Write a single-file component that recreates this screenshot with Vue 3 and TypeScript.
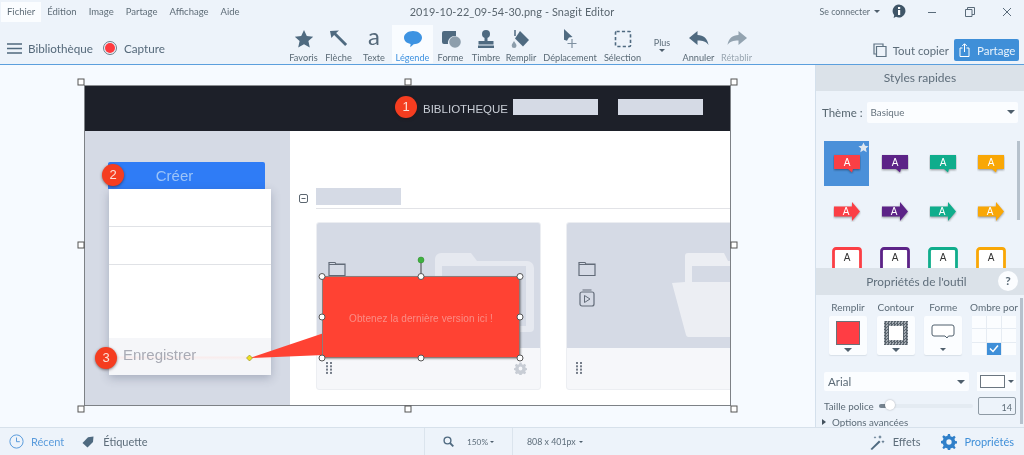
<script setup lang="ts">
const menu: string[] = ['Fichier', 'Édition', 'Image', 'Partage', 'Affichage', 'Aide']
const colors: string[] = ['#fb3f45', '#5c2387', '#10ad8c', '#f9a706']
const handles: number[][] = [
  [322, 211.5], [421, 211.5], [520, 211.5], [322, 252], [520, 252], [322, 293], [421, 293], [520, 293]
]
const frame: number[][] = [
  [81, 17], [408, 17], [734, 17], [81, 180], [734, 180], [81, 344], [408, 344], [734, 344]
]
const shadowCells: number[] = [0, 1, 2, 3, 4, 5, 6, 7, 8]
</script>

<template>
  <div class="app">
    <header class="top">
      <div class="titlebar">
        <nav class="menu">
          <span v-for="(m, i) in menu" :key="m" class="menu-item" :class="{ on: i === 0 }">{{ m }}</span>
        </nav>
        <div class="title">2019-10-22_09-54-30.png - Snagit Editor</div>
        <div class="win">
          <span class="login">Se connecter</span><i class="caret small"></i>
          <svg class="info" width="14" height="15" viewBox="0 0 14 15"><path d="M7 0.5a6.5 6.5 0 1 1-3 12.3L1.6 14l.6-2.8A6.5 6.5 0 0 1 7 .5z" fill="#3f5567"/><rect x="6" y="6" width="2.2" height="5" fill="#fff"/><rect x="6" y="3" width="2.2" height="2" fill="#fff"/></svg>
          <svg class="w1" width="10" height="10" viewBox="0 0 10 10"><path d="M1 5.5h8" stroke="#5a6b7a" stroke-width="1"/></svg>
          <svg class="w2" width="10" height="10" viewBox="0 0 10 10"><path d="M.5 2.5h6.5v7H.5zM2.5 2.5V.5h7v7H7" fill="none" stroke="#5a6b7a"/></svg>
          <svg class="w3" width="10" height="10" viewBox="0 0 10 10"><path d="M1 1l8 8M9 1l-8 8" stroke="#5a6b7a" stroke-width="1"/></svg>
        </div>
      </div>
      <div class="toolbar">
        <div class="left-tools">
          <svg width="15" height="11" viewBox="0 0 15 11"><path d="M0 1h15M0 5.500h15M0 10h15" stroke="#50697e" stroke-width="1.600"/></svg>
          <span class="biblio">Bibliothèque</span>
          <span class="rec"><i></i></span>
          <span class="biblio">Capture</span>
        </div>
        <div class="tools">
          <div class="tool t-fav"><svg width="20" height="20" viewBox="0 0 20 20"><path d="M10 1l2.8 6 6.4.7-4.8 4.3 1.4 6.5L10 15.2 4.200 18.500 5.600 12 .8 7.700l6.400-.7z" fill="#4f6a80"/></svg><span>Favoris</span></div>
          <div class="tool t-arr"><svg width="20" height="20" viewBox="0 0 20 20"><path d="M1 2l9-.6-2.900 2.700 11 11-2 2-11-11L2.400 9z" fill="#4f6a80"/></svg><span>Flèche</span></div>
          <div class="tool t-txt"><em>a</em><span>Texte</span></div>
          <div class="tool active"><svg width="20" height="20" viewBox="0 0 20 20"><path d="M10 2c5 0 9 2.800 9 6.800 0 3.700-4 6.500-8.300 6.500l-3.500 3 .4-3.400C3.400 14.200 1 11.800 1 8.800 1 4.800 5 2 10 2z" fill="#3d93e2"/></svg><span>Légende</span></div>
          <div class="tool t-forme"><svg width="20" height="20" viewBox="0 0 20 20"><path d="M1 4a2 2 0 0 1 2-2h12v5a7 7 0 0 0-8 8H3a2 2 0 0 1-2-2z" fill="#4f6a80"/><circle cx="14" cy="13" r="5.800" fill="#8d9eac"/></svg><span>Forme</span></div>
          <div class="tool t-timbre"><svg width="20" height="20" viewBox="0 0 20 20"><circle cx="10" cy="5" r="4" fill="#4f6a80"/><path d="M8.500 8h3v4h6v3.500h-15V12h6z" fill="#4f6a80"/><rect x="2" y="16.500" width="16" height="2.500" fill="#4f6a80"/></svg><span>Timbre</span></div>
          <div class="tool t-rem"><svg width="20" height="20" viewBox="0 0 20 20"><path d="M9 2l9 9-6 6.500-8-8z" fill="#4f6a80"/><path d="M4 1v6" stroke="#4f6a80" stroke-width="1.500"/><path d="M3 12c1 2 2.500 3 2.500 4.700a2.400 2.400 0 0 1-4.800 0C.7 15 2 14 3 12z" fill="#8d9eac"/></svg><span>Remplir</span></div>
          <div class="tool t-dep"><svg width="20" height="20" viewBox="0 0 20 20"><path d="M4 0l8.500 8-3.500.4-1 1.600-1 1.800-3-1z" fill="#4f6a80"/><path d="M12 10v9M7.500 14.500h9" stroke="#7e90a0" stroke-width="1.200"/></svg><span>Déplacement</span></div>
          <div class="tool t-sel"><svg width="20" height="20" viewBox="0 0 20 20"><rect x="2.500" y="2.500" width="15" height="15" rx="1" fill="none" stroke="#4f6a80" stroke-width="1.600" stroke-dasharray="3.200 2.200"/></svg><span>Sélection</span></div>
          <div class="plus"><span>Plus</span><i class="caret small"></i></div>
          <div class="tool t-ann"><svg width="20" height="20" viewBox="0 0 20 20"><path d="M0 9l8.500-7v4c6 0 10 3.500 11 10-2.500-3.400-5.500-4.400-11-4.400V16z" fill="#4f6a80"/></svg><span>Annuler</span></div>
          <div class="tool t-ret dim"><svg width="20" height="20" viewBox="0 0 20 20"><path d="M20 9l-8.500-7v4c-6 0-10 3.500-11 10 2.500-3.400 5.500-4.400 11-4.400V16z" fill="#93a3b0"/></svg><span>Rétablir</span></div>
        </div>
        <div class="right-tools">
          <svg width="14" height="14" viewBox="0 0 14 14"><path d="M3.500 3.500h9.500v10H3.500zM3.500 11H1V1h9v2.500" fill="none" stroke="#5f7383" stroke-width="1.200"/></svg>
          <span class="copy">Tout copier</span>
          <button class="share">
            <svg width="11" height="14" viewBox="0 0 11 14"><path d="M3.500 5H1v8.500h9V5H7.500M5.500 9V1M3.200 3l2.300-2.300L7.800 3" fill="none" stroke="#fff" stroke-width="1"/></svg>
            <span>Partage</span>
          </button>
        </div>
      </div>
    </header>

    <main class="main">
      <section class="canvas">
        <div class="shot">
          <div class="shot-head">
            <span class="lib">BIBLIOTHEQUE</span>
            <i class="ph"></i>
            <i class="ph"></i>
          </div>
          <div class="shot-body">
            <aside class="shot-side">
              <div class="create">Créer</div>
              <div class="panel">
                <div class="row r1"></div>
                <div class="row r2"></div>
                <div class="row r3"></div>
                <div class="save">Enregistrer</div>
              </div>
            </aside>
            <div class="shot-content">
              <div class="group">
                <svg width="9" height="9" viewBox="0 0 9 9"><rect x=".5" y=".5" width="8" height="8" rx="1.500" fill="none" stroke="#5c6670"/><path d="M2.500 4.500h4" stroke="#5c6670"/></svg>
                <i class="group-ph"></i>
              </div>
              <div class="cards">
                <article class="card">
                  <div class="card-top">
                    <svg class="big" width="100" height="82" viewBox="0 0 100 82"><path d="M0 8a6 6 0 0 1 6-6h30l6 8h50a7 7 0 0 1 7 7v60a4 4 0 0 1-4 4H4a4 4 0 0 1-4-4z" fill="#e6e9f0"/><rect x="7" y="15" width="84" height="60" fill="#d5dae5"/></svg>
                    <svg class="mini" width="18" height="16" viewBox="0 0 18 16"><path d="M1 14.500v-13h6l1 1.500h9v11.500zM1 3.500h16" fill="none" stroke="#626b78" stroke-width="1.200"/></svg>
                  </div>
                  <div class="card-foot">
                    <svg width="8" height="12" viewBox="0 0 8 12"><g fill="#747c88"><rect x="0" y="0" width="2" height="2"/><rect x="4" y="0" width="2" height="2"/><rect x="0" y="3.300" width="2" height="2"/><rect x="4" y="3.300" width="2" height="2"/><rect x="0" y="6.600" width="2" height="2"/><rect x="4" y="6.600" width="2" height="2"/><rect x="0" y="9.900" width="2" height="2"/><rect x="4" y="9.900" width="2" height="2"/></g></svg>
                    <svg width="13" height="13" viewBox="0 0 24 24"><path d="M12 8.500a3.500 3.500 0 1 0 0 7 3.500 3.500 0 0 0 0-7zM10 1h4l.6 3 2.400 1 2.600-1.700 2.800 2.800L20.700 8.700 21.700 11l3 .6v2.800l-3 .6-1 2.400 1.700 2.600-2.800 2.800-2.600-1.700-2.400 1-.6 3h-4l-.6-3-2.400-1-2.600 1.700-2.800-2.800 1.700-2.600-1-2.400-3-.6v-2.800l3-.6 1-2.300L1.600 6.100l2.800-2.800L7 5l2.400-1z" fill="#c8cdd5" fill-rule="evenodd"/></svg>
                  </div>
                </article>
                <article class="card two">
                  <div class="card-top">
                    <svg class="big" width="76" height="86" viewBox="0 0 76 86"><path d="M13 30V4a3 3 0 0 1 3-3h36l4 8h20v76H16a3 3 0 0 1-2-2L0 31z" fill="#eceef3"/><rect x="20" y="14" width="56" height="16" fill="#d5dae5"/></svg>
                    <svg class="mini" width="18" height="16" viewBox="0 0 18 16"><path d="M1 14.500v-13h6l1 1.500h9v11.500zM1 3.500h16" fill="none" stroke="#626b78" stroke-width="1.200"/></svg>
                    <svg class="mini m2" width="16" height="18" viewBox="0 0 16 18"><rect x="1" y="3" width="14" height="14" rx="2" fill="none" stroke="#626b78" stroke-width="1.200"/><path d="M3.500 1h9" stroke="#626b78"/><path d="M5.500 6.500l5.500 3.500-5.500 3.500z" fill="none" stroke="#626b78"/></svg>
                  </div>
                  <div class="card-foot">
                    <svg width="8" height="12" viewBox="0 0 8 12"><g fill="#747c88"><rect x="0" y="0" width="2" height="2"/><rect x="4" y="0" width="2" height="2"/><rect x="0" y="3.300" width="2" height="2"/><rect x="4" y="3.300" width="2" height="2"/><rect x="0" y="6.600" width="2" height="2"/><rect x="4" y="6.600" width="2" height="2"/><rect x="0" y="9.900" width="2" height="2"/><rect x="4" y="9.900" width="2" height="2"/></g></svg>
                  </div>
                </article>
              </div>
            </div>
          </div>
        </div>

        <span class="badge b1">1</span>
        <span class="badge b2">2</span>
        <span class="badge b3">3</span>

        <svg class="overlay" width="815" height="362" viewBox="0 0 815 362">
          <g v-for="(f, i) in frame" :key="i">
            <rect :x="f[0] - 3" :y="f[1] - 3" width="6" height="6" fill="#fff" stroke="#555" stroke-width="1" />
          </g>
          <path d="M324 268L250 293L324 290z" fill="#ff4233" />
          <path d="M421 211V195" stroke="#444" />
          <circle cx="421" cy="195" r="3" fill="#3fb13f" stroke="#2a8a2a" stroke-width=".5" />
          <path d="M249.500 290l3 3-3 3-3-3z" fill="#f0e020" stroke="#8a8420" stroke-width=".6" />
        </svg>

        <div class="callout">Obtenez la dernière version ici !</div>

        <svg class="overlay" width="815" height="362" viewBox="0 0 815 362">
          <circle v-for="(h, i) in handles" :key="i" :cx="h[0]" :cy="h[1]" r="3" fill="#fff" stroke="#555" stroke-width="1" />
        </svg>
      </section>

      <aside class="side">
        <h2 class="side-head">Styles rapides</h2>
        <div class="theme">
          <label>Thème :</label>
          <div class="select"><span>Basique</span><i class="caret"></i></div>
        </div>
        <div class="styles">
          <div v-for="(c, i) in colors" :key="'a' + c" class="cell" :class="{ sel: i === 0 }">
            <svg width="28" height="20" viewBox="0 0 28 20"><path d="M1 1h26v14H20l-1 3.500-4-3.500H1z" :fill="c" class="drop"/><text x="14" y="11.500" class="a" fill="#fff">A</text></svg>
            <svg v-if="i === 0" class="star" width="11" height="11" viewBox="0 0 20 20"><path d="M10 1l2.800 6 6.400.7-4.800 4.300 1.400 6.500L10 15.200 4.200 18.500 5.600 12 .8 7.700l6.400-.7z" fill="#dfe7ef"/></svg>
          </div>
          <div v-for="c in colors" :key="'b' + c" class="cell">
            <svg width="28" height="20" viewBox="0 0 28 20"><path d="M1 4.500h18V0l8 9.500-8 9.500v-4.500H1z" :fill="c" class="drop"/><text x="13" y="13" class="a" fill="#fff">A</text></svg>
          </div>
          <div v-for="c in colors" :key="'c' + c" class="cell">
            <svg width="30" height="26" viewBox="0 0 30 26"><rect x="1.500" y="1.500" width="27" height="23" rx="2.500" fill="#fff" :stroke="c" stroke-width="2.800"/><text x="15" y="14" class="a dark" fill="#333">A</text></svg>
          </div>
          <div class="bar"></div>
        </div>

        <div class="props">
          <h2 class="side-head props-head">Propriétés de l'outil<span class="help">?</span></h2>
          <div class="props-body">
            <div class="swatches">
              <div class="sw">
                <span class="sw-l">Remplir</span>
                <div class="box"><i class="fill"></i><i class="caret"></i></div>
              </div>
              <div class="sw">
                <span class="sw-l">Contour</span>
                <div class="box"><i class="outline"></i><i class="caret"></i></div>
              </div>
              <div class="sw">
                <span class="sw-l">Forme</span>
                <div class="box">
                  <svg class="shape" width="24" height="16" viewBox="0 0 24 16"><path d="M3 1h18a2 2 0 0 1 2 2v7a2 2 0 0 1-2 2h-3.500l-1.500 2-2-2H3a2 2 0 0 1-2-2V3a2 2 0 0 1 2-2z" fill="#fff" stroke="#4f5f6c"/></svg>
                  <i class="caret small"></i>
                </div>
              </div>
              <div class="sw sw-o">
                <span class="sw-l">Ombre por</span>
                <div class="shadow-grid">
                  <i v-for="n in shadowCells" :key="n" :class="{ checked: n === 7 }">
                    <svg v-if="n === 7" width="10" height="9" viewBox="0 0 10 9"><path d="M1 4.500l3 3 5-6" fill="none" stroke="#fff" stroke-width="1.500"/></svg>
                  </i>
                </div>
              </div>
            </div>
            <div class="font-row">
              <div class="font"><span>Arial</span><i class="caret"></i></div>
              <div class="color"><i></i><i class="caret small"></i></div>
            </div>
            <div class="size-row">
              <span>Taille police</span>
              <div class="slider"><i class="done"></i><i class="thumb"></i></div>
              <div class="num">14</div>
            </div>
            <div class="adv"><i class="tri"></i><span>Options avancées</span></div>
          </div>
          <div class="bar2"></div>
        </div>
      </aside>
    </main>

    <footer class="bottom">
      <div class="b-left">
        <svg width="15" height="15" viewBox="0 0 15 15"><circle cx="7.500" cy="7.500" r="6.600" fill="none" stroke="#5b9cdc" stroke-width="1"/><path d="M7.500 3.500v4.200h3.300" fill="none" stroke="#5b9cdc"/></svg>
        <span class="recent">Récent</span>
        <svg class="tag" width="12" height="12" viewBox="0 0 12 12"><path d="M.5 7L6 1.200 11.500.5 11 6l-5.500 5.500z" fill="#4f6a80"/></svg>
        <span class="etq">Étiquette</span>
      </div>
      <div class="zoom">
        <svg width="11" height="11" viewBox="0 0 11 11"><circle cx="4.500" cy="4.500" r="3.400" fill="none" stroke="#4f6a80" stroke-width="1.400"/><path d="M7 7l3.300 3.300" stroke="#4f6a80" stroke-width="1.800"/></svg>
        <span>150%</span><i class="caret tiny"></i>
      </div>
      <div class="dims"><span>808 x 401px</span><i class="caret tiny"></i></div>
      <div class="b-right">
        <svg width="16" height="16" viewBox="0 0 16 16"><path d="M1.500 15L10 6.500l1.500 1.500L3 16z" fill="#4f6a80"/><path d="M11 1l.6 1.600L13 3l-1.400.6L11 5l-.6-1.400L9 3l1.400-.4zM14 6l.5 1.200 1.200.5-1.200.5-.5 1.200-.5-1.200-1.200-.5 1.200-.5zM6 2l.4 1 1 .4-1 .4-.4 1-.4-1-1-.4 1-.4z" fill="#4f6a80"/></svg>
        <span class="eff">Effets</span>
        <svg class="gear" width="16" height="16" viewBox="0 0 24 24"><path d="M12 8a4 4 0 1 0 0 8 4 4 0 0 0 0-8zM10.500 0h3l.7 3.300 2.800 1.200 2.900-1.900 2.100 2.100-1.900 2.900 1.200 2.800 3.300.7v3l-3.300.7-1.200 2.800 1.900 2.900-2.100 2.100-2.900-1.900-2.800 1.200-.7 3.300h-3l-.7-3.300-2.800-1.200-2.900 1.900-2.100-2.100 1.900-2.900-1.200-2.800L-.7 13.500v-3l3.300-.7 1.200-2.800-1.900-2.900 2.100-2.100L6.900 3.900l2.800-1.200z" fill="#2f7fc9" fill-rule="evenodd"/></svg>
        <span class="prop">Propriétés</span>
      </div>
    </footer>
  </div>
</template>

<style>
html, body { margin: 0; padding: 0; background: #edf3fa; }
</style>

<style scoped>
* { box-sizing: border-box; }
.app { width: 1024px; height: 455px; display: flex; flex-direction: column; overflow: hidden; background: #edf3fa; font-family: Lato, "Open Sans", sans-serif; color: #5d6d7a; filter: blur(.35px); }
i { display: block; font-style: normal; }
.caret { width: 0; height: 0; border-left: 4px solid transparent; border-right: 4px solid transparent; border-top: 4px solid #4f5f6c; }
.caret.small { border-left-width: 3.500px; border-right-width: 3.500px; border-top-width: 3px; }
.caret.tiny { border-left-width: 2.500px; border-right-width: 2.500px; border-top-width: 2.500px; }

.top { height: 65px; flex: none; border-bottom: 1px solid #5b9fdd; }
.titlebar { height: 21px; margin-top: 1px; display: grid; grid-template-columns: 1fr auto 1fr; align-items: center; }
.menu { display: flex; align-items: stretch; height: 20px; padding-left: 1px; }
.menu-item { padding: 0 6px; font-size: 9.500px; line-height: 20px; color: #5f6d78; }
.menu-item.on { background: #fbfdff; }
.title { font-size: 10.900px; color: #5a666f; letter-spacing: .1px; }
.win { display: flex; align-items: center; justify-content: flex-end; font-size: 8.800px; }
.login { margin-right: 4px; color: #5f6d78; }
.info { margin-left: 12px; }
.w1 { margin-left: 21px; }
.w2 { margin-left: 28px; }
.w3 { margin-left: 27px; margin-right: 12px; }

.toolbar { height: 42px; display: flex; align-items: stretch; }
.left-tools { width: 288px; padding: 10px 0 0 7px; display: flex; align-items: center; }
.biblio { font-size: 11.700px; color: #55697a; margin-left: 6px; }
.rec { width: 14px; height: 14px; border-radius: 50%; border: 1px solid #6f7d88; margin-left: 10px; display: flex; align-items: center; justify-content: center; }
.rec i { width: 10px; height: 10px; border-radius: 50%; background: #ff3a3f; }
.rec + .biblio { margin-left: 7px; }
.tools { display: flex; align-items: stretch; }
.tool { display: flex; flex-direction: column; align-items: center; font-size: 9.200px; color: #5a6a76; height: 42px; padding-top: 7px; position: relative; }
.tool svg { height: 20px; flex: none; }
.tool em { height: 20px; font-family: Lato, sans-serif; font-style: normal; font-size: 24px; line-height: 14px; color: #55697a; }
.tool span { margin-top: 3px; white-space: nowrap; line-height: 11px; }
.t-fav { width: 31px; }
.t-arr { width: 29px; margin-left: 5px; }
.t-txt { width: 24px; margin-left: 9px; }
.active { width: 41px; margin-left: 6px; margin-top: 3px; padding-top: 4px; height: 38px; background: #f9fcff; color: #3f92e0; }
.t-forme { width: 27px; margin-left: 4px; }
.t-timbre { width: 30px; margin-left: 7px; }
.t-rem { width: 32px; margin-left: 4px; }
.t-dep { width: 56px; margin-left: 5px; }
.t-sel { width: 39px; margin-left: 5px; }
.plus { width: 18px; margin-left: 11px; display: flex; flex-direction: column; align-items: center; font-size: 9px; padding-top: 15px; gap: 1px; }
.t-ann { width: 33px; margin-left: 11px; }
.t-ret { width: 33px; margin-left: 5px; }
.dim { color: #99a6b1; }
.right-tools { flex: 1; display: flex; align-items: center; padding: 14px 5px 0 0; justify-content: flex-end; }
.copy { font-size: 11.400px; color: #5d6d7a; margin-left: 6px; }
.share { width: 65px; height: 22px; margin-left: 5px; border: 0; border-radius: 2px; background: #3f8fd8; color: #e9f3fc; font: 11.500px Lato, sans-serif; display: flex; align-items: center; padding: 0 0 0 5px; gap: 7px; }

.main { flex: 1; display: flex; min-height: 0; }
.canvas { width: 815px; flex: none; position: relative; background: #f6faff; overflow: hidden; }
.shot { position: absolute; left: 84px; top: 20px; width: 647px; height: 321px; border: 1px solid #7d8186; border-top-color: #8a8d91; background: #fff; display: flex; flex-direction: column; overflow: hidden; }
.shot-head { height: 45px; flex: none; background: #1d2029; display: flex; align-items: center; padding-left: 338px; }
.lib { font: 11.500px "Liberation Sans", Arial, sans-serif; color: #c9ced6; margin-right: 5px; }
.ph { width: 85px; height: 16px; background: #d5dae5; margin-right: 20px; flex: none; margin-top: -3px; }
.shot-body { flex: 1; display: flex; min-height: 0; }
.shot-side { width: 205px; flex: none; background: #d5dae5; padding: 31px 0 0 23px; }
.create { width: 157px; height: 27px; padding-right: 24px; background: #2f7cf6; border-radius: 2px 2px 0 0; color: #9cc4f8; font: 15px "Liberation Sans", Arial, sans-serif; line-height: 27px; text-align: center; }
.panel { width: 162px; margin-left: 1px; height: 186px; background: #fff; box-shadow: 0 3px 9px rgba(60, 70, 100, .3); display: flex; flex-direction: column; }
.row { flex: none; }
.r1 { height: 38px; border-bottom: 1px solid #e0e2e6; }
.r2 { height: 38px; border-bottom: 1px solid #e0e2e6; }
.r3 { height: 73px; }
.save { flex: 1; background: linear-gradient(#f5f6f9 0 48%, #f9ecec 52%, #f5f6f9 60%); color: #a9abb5; font: 15px "Liberation Sans", Arial, sans-serif; padding: 8px 0 0 14px; }
.shot-content { flex: 1; padding: 57px 0 0 9px; overflow: hidden; min-width: 0; }
.group { display: flex; align-items: center; gap: 8px; border-bottom: 0; height: 20px; position: relative; }
.group::after { content: ""; position: absolute; left: 17px; right: 0; bottom: -1px; height: 1px; background: #e2e3e7; }
.group-ph { width: 85px; height: 17px; background: #d5dae5; margin-top: -3px; }
.cards { display: flex; gap: 25px; margin: 14px 0 0 17px; }
.card { width: 225px; height: 168px; flex: none; border-radius: 3px; overflow: hidden; background: #f6f7fa; border: 1px solid #eceef2; display: flex; flex-direction: column; position: relative; }
.card-top { height: 125px; background: #d5dae5; position: relative; flex: none; overflow: hidden; }
.big { position: absolute; left: 118px; top: 28px; }
.two .big { left: 105px; top: 29px; }
.mini { position: absolute; left: 11px; top: 38px; }
.m2 { top: 66px; left: 12px; }
.card-foot { flex: 1; display: flex; justify-content: space-between; align-items: center; padding: 0 13px 0 9px; margin-top: -1px; }
.two { width: 200px; }

.badge { position: absolute; width: 22px; height: 22px; border-radius: 50%; background: #f53d20; color: #fbe1d9; font: 13px/22px "Liberation Sans", Arial, sans-serif; text-align: center; box-shadow: 0 1px 3px rgba(40, 20, 20, .55); }
.b1 { left: 395px; top: 31px; }
.b2 { left: 102px; top: 99px; }
.b3 { left: 95px; top: 282px; }
.overlay { position: absolute; left: 0; top: 0; pointer-events: none; }
.callout { position: absolute; left: 322px; top: 211px; width: 198px; height: 82px; background: #ff4233; border: 1px solid #8e7a78; border-radius: 2px; box-shadow: 1px 1px 2px rgba(0, 0, 0, .35); color: #fb8d86; font: 10px/84px "Liberation Sans", Arial, sans-serif; text-align: center; letter-spacing: .1px; }

.side { flex: 1; border-left: 1px solid #d4e0ec; display: flex; flex-direction: column; position: relative; min-width: 0; }
.side-head { margin: 0; height: 26px; background: #dbe2e9; font-size: 12px; font-weight: 400; line-height: 26px; text-align: center; color: #5f6e7b; flex: none; }
.theme { height: 22px; margin: 10px 0 0 6px; display: flex; align-items: center; gap: 4px; font-size: 11.500px; color: #56656f; }
.select { width: 151px; height: 21px; background: #fbfdff; border-radius: 2px; display: flex; align-items: center; justify-content: space-between; padding: 0 3px 0 4px; font-size: 9.800px; color: #66737e; }
.styles { position: relative; height: 127px; margin-top: 18px; padding: 0 0 0 8px; display: grid; grid-template-columns: repeat(4, 48px); grid-auto-rows: 48px; align-content: start; overflow: hidden; flex: none; }
.cell { width: 45px; height: 45px; display: flex; align-items: center; justify-content: center; position: relative; }
.cell.sel { background: #4a90d9; }
.star { position: absolute; right: 0; top: 1px; }
.a { font: 10px "Liberation Sans", Arial, sans-serif; text-anchor: middle; }
.drop { filter: drop-shadow(0 1.500px 1px rgba(0, 0, 0, .4)); }
.bar { position: absolute; left: 201px; top: -6px; width: 3px; height: 85px; background: #b6c1cc; }
.props { position: relative; flex: none; height: 159px; display: flex; flex-direction: column; background: #edf3fa; }
.props-head { position: relative; height: 27px; line-height: 27px; font-size: 11.800px; padding-right: 7px; flex: none; }
.help { position: absolute; right: 6px; top: 3px; width: 20px; height: 20px; line-height: 20px; border-radius: 50%; background: #fbfdff; font-size: 12px; font-weight: 700; color: #5a6a76; }
.props-body { padding: 0 8px; flex: 1; overflow: hidden; }
.swatches { display: flex; height: 60px; padding: 7px 0 0 5px; }
.sw { width: 48px; display: flex; flex-direction: column; align-items: flex-start; }
.sw-l { width: 38px; text-align: center; font-size: 10px; line-height: 11px; white-space: nowrap; color: #5c6b77; margin-bottom: 3px; display: flex; justify-content: center; }
.box { width: 38px; height: 39px; background: #fbfdff; border-radius: 2px; display: flex; flex-direction: column; align-items: center; padding-top: 5px; gap: 3px; box-shadow: 0 1px 1px rgba(100,120,140,.15); }
.fill { width: 24px; height: 24px; background: #ff3d44; border: 1px solid #6b7078; }
.outline { width: 24px; height: 24px; padding: 5px; background: repeating-conic-gradient(#59636c 0 25%, #a2a9b0 0 50%) 0 0 / 3px 3px; position: relative; }
.outline::after { content: ""; display: block; width: 14px; height: 14px; background: #fff; }
.shape { margin: 3px 0 5px; }
.sw-o { width: 44px; margin-top: 0; }
.sw-o .sw-l { width: 44px; }
.shadow-grid { width: 44px; height: 40px; display: grid; grid-template-columns: repeat(3, 1fr); grid-template-rows: repeat(3, 1fr); gap: 1px; background: #e6ecf3; }
.shadow-grid i { background: #fbfdff; display: flex; align-items: center; justify-content: center; }
.shadow-grid .checked { background: #3f8fd8; }
.font-row { display: flex; justify-content: space-between; margin-top: 17px; height: 19px; width: 192px; }
.font { width: 145px; background: #fbfdff; border-radius: 2px; padding: 0 4px 0 4px; display: flex; align-items: center; justify-content: space-between; font-size: 11.500px; color: #5c6b77; }
.color { width: 39px; background: #fbfdff; display: flex; align-items: center; gap: 3px; padding: 0 0 0 3px; }
.color i:first-child { width: 25px; height: 13px; background: #fff; border: 1px solid #6b7680; }
.size-row { display: flex; align-items: center; height: 19px; margin-top: 5px; font-size: 9.800px; color: #5c6b77; width: 192px; }
.slider { position: relative; width: 94px; height: 4px; background: #e4ebf2; border-radius: 2px; margin-left: 5px; }
.done { position: absolute; left: 0; top: 0; width: 8px; height: 4px; background: #75838f; border-radius: 2px; }
.thumb { position: absolute; left: 6px; top: -3.500px; width: 10px; height: 10px; border-radius: 50%; background: #fff; box-shadow: 0 0 2px rgba(0,0,0,.3); }
.num { width: 38px; height: 18px; border: 1px solid #8e9aa4; border-radius: 2px; margin-left: auto; text-align: right; padding-right: 3px; line-height: 20px; font-size: 9px; }
.adv { display: flex; align-items: center; height: 14px; font-size: 9.800px; gap: 6px; margin-left: -2px; white-space: nowrap; color: #5c6b77; }
.tri { border-left: 4px solid #44525e; border-top: 3px solid transparent; border-bottom: 3px solid transparent; }
.bar2 { position: absolute; right: 1px; top: 30px; width: 3px; height: 126px; background: #b6c1cc; }

.bottom { height: 28px; flex: none; border-top: 1px solid #d7e1eb; background: #edf3fa; display: flex; align-items: center; font-size: 11px; position: relative; z-index: 1; }
.b-left { width: 424px; display: flex; align-items: center; padding-left: 9px; height: 100%; }
.recent { color: #5b9cdc; margin-left: 7px; }
.tag { margin-left: 18px; }
.etq { margin-left: 9px; color: #5d6d7a; }
.zoom { width: 89px; height: 100%; display: flex; align-items: center; border-left: 1px solid #dbe4ed; border-right: 1px solid #dbe4ed; padding-left: 18px; font-size: 8.300px; gap: 2px; }
.zoom span { margin-left: 11px; }
.dims { height: 100%; display: flex; align-items: center; padding-left: 14px; font-size: 8.800px; gap: 3px; }
.b-right { margin-left: auto; display: flex; align-items: center; padding-right: 10px; }
.eff { margin-left: 8px; font-size: 11px; }
.gear { margin-left: 21px; }
.prop { margin-left: 7px; color: #3f8fd8; font-size: 11px; }
</style>
